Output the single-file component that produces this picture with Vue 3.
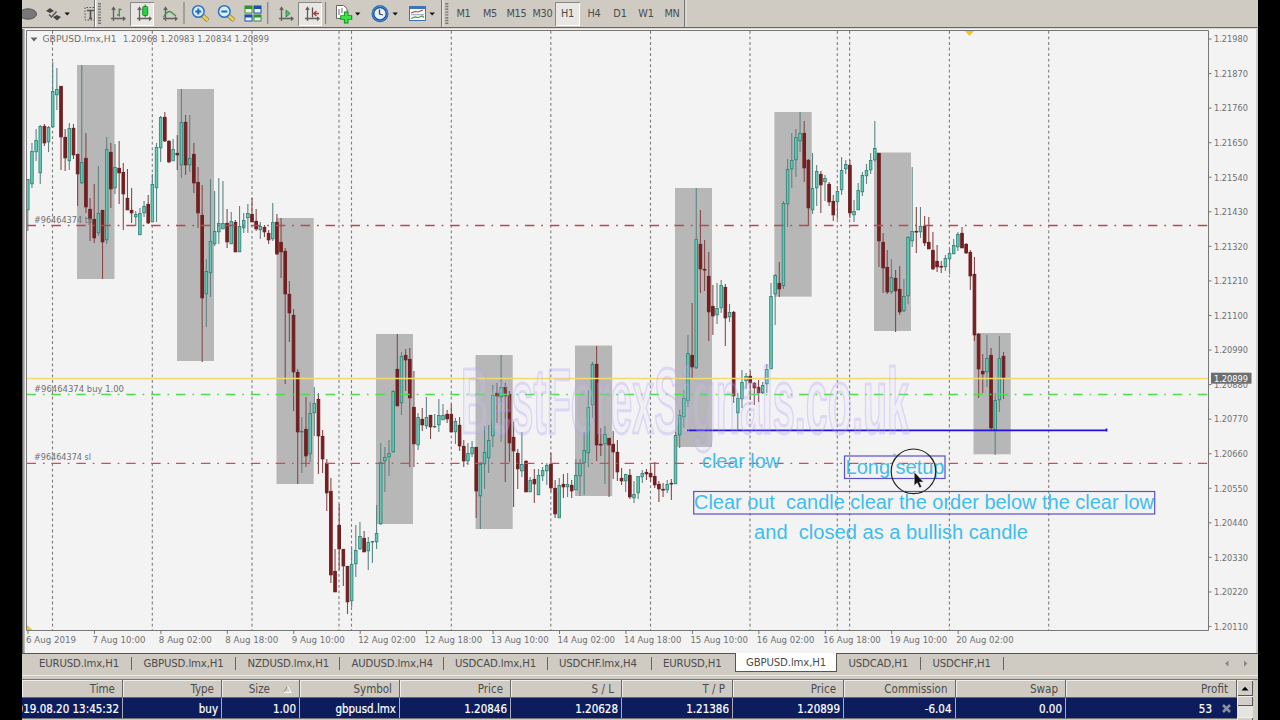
<script setup>
const periods = ['M1', 'M5', 'M15', 'M30', 'H1', 'H4', 'D1', 'W1', 'MN']
const tabs = [
  'EURUSD.lmx,H1', 'GBPUSD.lmx,H1', 'NZDUSD.lmx,H1', 'AUDUSD.lmx,H4', 'USDCAD.lmx,H1',
  'USDCHF.lmx,H4', 'EURUSD,H1', 'GBPUSD.lmx,H1', 'USDCAD,H1', 'USDCHF,H1'
]
const order = [
  ['Time', '2019.08.20 13:45:32'],
  ['Type', 'buy'],
  ['Size', '1.00'],
  ['Symbol', 'gbpusd.lmx'],
  ['Price', '1.20846'],
  ['S / L', '1.20628'],
  ['T / P', '1.21386'],
  ['Price', '1.20899'],
  ['Commission', '-6.04'],
  ['Swap', '0.00'],
  ['Profit', '53']
]

// day separators
const days = [52.5, 152.3, 252, 339, 351.5, 451.3, 550.8, 650.5, 750, 837.3, 849.6, 949.4, 1048.7]

// x, y, width, height of the shaded sessions
const sessions = [
  [77, 65, 37.5, 214], [177, 89, 37, 272], [276.5, 218, 37.2, 266], [376, 334, 37, 190],
  [475.5, 355, 37.2, 174], [575, 345.5, 37.2, 150.5], [675, 188, 37, 259], [774.4, 112, 37.3, 184.6],
  [874, 152.5, 37, 178.5], [973.5, 333, 37.2, 121.3]
]

const prices = Array.from({ length: 18 }, (_, i) => ({
  label: (1.2198 - i * 0.0011).toFixed(5),
  y: 39 + i * 34.56
}))

const times = [
  '6 Aug 2019', '7 Aug 10:00', '8 Aug 02:00', '8 Aug 18:00', '9 Aug 10:00', '12 Aug 02:00',
  '12 Aug 18:00', '13 Aug 10:00', '14 Aug 02:00', '14 Aug 18:00', '15 Aug 10:00', '16 Aug 02:00',
  '16 Aug 18:00', '19 Aug 10:00', '20 Aug 02:00'
].map((label, i) => ({
  label,
  tick: 28 + i * 66.44,
  x: 26 + i * 66.44,
  w: i === 0 ? 50 : i < 5 ? 53 : 57.5
}))

// high, body top, body bottom, low, 1 = bullish
const raw = `
179 179 210 231 1|143 151 184 188 1|129 140 152 161 1|125 126 173 184 1|124 126 143 146 0|126 127 142 152 1
62 91 127 128 1|68 89 95 110 1|86 86 137 170 0|129 137 158 171 0|123 128 161 170 1|124 128 155 159 0
154 154 174 206 0|65 162 183 184 1|133 158 207 213 0|198 209 219 241 0|184 219 238 243 0|166 213 233 236 1
210 210 242 279 0|137 149 240 244 1|143 152 189 208 0|144 167 188 194 1|141 168 173 204 0|163 172 194 230 0
169 198 210 210 0|188 210 213 223 0|211 214 217 226 1|208 213 235 235 1|201 206 213 217 1|195 204 223 224 0
174 184 222 222 1|143 147 188 222 1|116 117 148 162 1|112 117 141 142 0|140 141 162 163 0|139 149 161 161 1
135 153 155 170 0|89 122 165 178 1|115 122 165 175 0|115 158 165 172 1|143 154 183 193 0|167 182 213 228 0
185 215 298 362 0|259 271 294 327 1|179 241 273 297 1|191 231 244 246 1|178 223 232 244 1|181 223 229 229 1
209 223 242 248 0|212 221 244 244 1|220 222 252 252 0|206 226 252 252 1|213 220 228 233 1|204 213 218 233 1
198 214 222 222 0|209 221 229 231 0|222 226 230 239 1|225 227 232 237 0|230 233 240 244 0|203 222 239 241 1
214 222 254 255 0|218 242 252 278 0|248 251 294 384 0|281 294 313 342 0|309 315 372 411 0|369 372 432 484 0
417 431 432 473 1|397 429 456 467 0|402 413 454 462 1|387 403 413 436 1|393 399 436 474 0|430 436 459 473 0
459 463 493 511 0|478 491 575 583 0|549 571 592 592 0|504 525 549 570 0|549 549 566 586 0|566 566 602 614 0
547 564 601 607 1|525 550 564 577 1|522 536 549 550 1|531 538 552 552 0|537 542 551 570 1|541 541 542 563 1
505 533 542 549 1|443 462 524 525 1|447 457 461 492 1|440 453 457 476 1|390 391 452 453 1|334 369 406 406 0
352 356 403 415 1|349 355 360 391 0|348 359 398 467 0|371 407 444 467 0|413 417 445 450 1|408 419 425 431 0
397 417 426 429 1|415 415 427 439 0|414 426 427 428 1|399 415 425 432 1|404 415 420 420 1|410 414 419 423 0
404 414 432 432 0|418 421 432 444 1|417 425 446 451 0|440 446 461 467 0|443 453 461 465 1|441 447 454 457 1
447 447 491 518 0|462 464 496 529 1|426 452 464 489 1|425 440 458 473 1|385 395 436 447 1|383 393 396 423 0
355 387 397 442 1|383 387 396 482 0|391 394 443 462 0|422 437 451 507 0|449 453 469 489 0|432 464 471 477 1
460 461 492 492 0|477 480 492 492 1|469 479 484 503 0|469 475 495 495 1|467 470 476 481 1|463 465 471 485 1
453 464 488 492 0|480 488 514 518 0|478 485 518 518 1|474 484 487 498 0|473 484 487 497 1|480 485 491 498 0
459 475 490 490 1|459 463 476 496 1|432 450 463 495 1|390 407 453 467 1|362 364 405 418 1|346 364 445 461 0
428 444 445 456 0|426 434 444 484 1|438 438 445 497 0|431 444 452 479 0|440 452 472 481 0|468 478 481 485 0
474 474 481 492 1|469 475 497 499 0|481 494 498 503 1|476 476 493 499 1|470 473 477 483 1|469 472 474 480 0
466 473 477 482 0|462 476 485 488 0|481 484 489 502 0|483 489 490 497 0|480 484 490 493 1|479 483 484 500 0
432 435 484 484 1|410 415 435 448 1|390 398 417 428 1|335 353 401 407 1|303 355 367 379 0|188 239 368 369 1
210 244 269 293 0|240 269 270 291 0|252 276 312 341 0|285 306 316 335 0|283 308 315 324 1|280 285 308 313 1
284 287 318 346 0|304 312 317 322 1|311 312 396 403 0|393 398 413 430 1|370 382 399 408 1|373 376 381 389 1
371 376 383 400 0|382 383 388 405 0|380 387 393 402 0|382 385 393 394 1|364 369 384 393 1|283 296 369 369 1
274 275 294 325 1|262 283 289 297 0|201 203 286 289 1|159 169 204 227 1|133 160 169 188 1|129 137 160 177 1
112 133 141 152 1|121 133 168 182 0|159 160 208 226 0|153 188 210 214 1|165 171 188 206 1|171 174 185 213 0
175 178 182 201 1|182 184 202 206 0|195 201 215 221 0|186 191 202 219 1|157 170 190 195 1|160 164 169 174 1
160 165 213 218 0|200 211 215 222 1|183 190 210 210 1|172 175 192 196 1|164 170 176 184 1|153 160 170 174 1
121 148 160 162 1|153 153 241 267 0|233 242 268 293 0|250 267 292 294 0|259 277 292 294 1|270 278 291 332 0
266 289 312 315 0|279 296 311 312 1|236 237 296 304 1|167 231 241 247 1|207 231 232 253 0|207 226 232 238 1
216 226 243 246 0|217 242 249 249 0|232 250 269 270 0|245 261 267 272 0|261 266 267 273 0|255 258 267 271 1
248 253 259 274 1|239 245 254 254 1|232 234 247 251 1|227 233 248 248 0|243 244 253 254 0|250 252 276 290 0
257 274 335 341 0|333 334 369 398 0|354 371 374 393 0|335 358 372 387 1|348 355 428 430 0|393 400 430 455 1
336 358 400 412 1|352 356 378 399 0`

const candles = raw.trim().split(/[|\n]/).map((row, i) => {
  const [high, top, bottom, low, up] = row.split(' ').map(Number)
  return { x: 27.8 + i * 4.152, high, top, bottom, low, up: up === 1 }
})
</script>

<template>
  <div class="terminal">
    <div class="toolbar">
      <svg viewBox="0 0 20 28"><ellipse cx="6" cy="14" rx="8.5" ry="5.2" fill="#777" stroke="#555" /></svg>
      <svg viewBox="0 0 20 28">
        <path d="M4 11l4-3 4 3-4 2zM11 17l4-2 4 2-4 3.500z" fill="#444" />
        <path d="M7 14.500l2.500 2.500 5-5.500" fill="none" stroke="#555" stroke-width="1.500" />
      </svg>
      <svg viewBox="0 0 10 28"><path d="M2.500 12.500h5.400l-2.700 3z" fill="#111" /></svg>
      <svg viewBox="0 0 23 28">
        <path d="M22 7.500H13V20h9" fill="none" stroke="#555" stroke-dasharray="1.500 1.500" />
        <path d="M15 10.500h7M18.500 10v8.500M17 18.500h3" fill="none" stroke="#555" stroke-width="1.700" />
        <path d="M22.500 0v27" stroke="#777" />
      </svg>
      <svg viewBox="0 0 10 28">
        <path d="M.7 0v27" stroke="#fff" stroke-width="1.400" />
        <path d="M4.500 3v21" stroke="#777" stroke-width="3" stroke-dasharray="1.400 1.400" />
      </svg>
      <svg viewBox="0 0 25 28">
        <path d="M8.500 8v13M6 18.500h13M6.800 10l1.700-2.500 1.700 2.500M18 17l2 1.500-2 2" class="axis" />
        <path d="M12 15h2.300M14.300 8.500v8M14.300 9.500h2.200" fill="none" stroke="#3f9450" stroke-width="1.400" />
      </svg>
      <svg viewBox="0 2 24 24" class="pressed">
        <path d="M9.500 8v13M7 18.500h13M7.800 10l1.700-2.500 1.700 2.500M19 17l2 1.500-2 2" class="axis" />
        <path d="M15.200 4.500v13" stroke="#167a20" />
        <rect x="12.700" y="6.500" width="5" height="9" rx="1" fill="#2fce4a" stroke="#178a2b" />
      </svg>
      <svg viewBox="0 0 28 28">
        <path d="M11.500 8v13M9 18.500h13M9.800 10l1.700-2.500 1.700 2.500M21 17l2 1.500-2 2" class="axis" />
        <path d="M9.500 17c3-5 5-6.500 7.500-5l5 4" fill="none" stroke="#3f9450" stroke-width="1.400" />
      </svg>
      <svg viewBox="0 0 5 28"><path d="M2 2v22" class="rule" /></svg>
      <svg viewBox="0 0 26 28">
        <path d="M15 15l6 5.500" stroke="#9c7a22" stroke-width="4.200" />
        <path d="M15 15l5.800 5.300" stroke="#efd15a" stroke-width="2.600" />
        <circle cx="11.300" cy="11.500" r="5.800" fill="#d5efff" stroke="#2f72c4" stroke-width="1.500" />
        <path d="M8.300 11.500h6M11.300 8.500v6" stroke="#2466bd" stroke-width="2" />
      </svg>
      <svg viewBox="0 0 27 28">
        <path d="M15 15l6 5.500" stroke="#9c7a22" stroke-width="4.200" />
        <path d="M15 15l5.800 5.300" stroke="#efd15a" stroke-width="2.600" />
        <circle cx="11.300" cy="11.500" r="5.800" fill="#d5efff" stroke="#2f72c4" stroke-width="1.500" />
        <path d="M8.300 11.500h6" stroke="#2466bd" stroke-width="2" />
      </svg>
      <svg viewBox="0 0 25 28">
        <path d="M4.500 5.500h8v8h-8zM13.500 14.500h8v7h-8z" fill="#388e2b" />
        <path d="M13.500 5.500h8v8h-8zM4.500 14.500h8v7h-8z" fill="#1b4fae" />
        <path d="M5.500 9h6v3.500h-6zM14.500 9h6v3.500h-6zM5.500 17.500h6v3h-6zM14.500 17.500h6v3h-6z" fill="#eef5f5" />
      </svg>
      <svg viewBox="0 0 5 28"><path d="M2.700 2v22" class="rule" /></svg>
      <svg viewBox="0 0 28 28">
        <path d="M11.500 8v13M9 18.500h13M9.800 10l1.700-2.500 1.700 2.500M21 17l2 1.500-2 2" class="axis" />
        <path d="M16 10v7l4.200-3.500z" fill="#52bd6c" stroke="#26813b" stroke-width=".8" />
      </svg>
      <svg viewBox="0 2 24 24" class="pressed">
        <path d="M9.500 8v13M7 18.500h13M7.800 10l1.700-2.500 1.700 2.500M19 17l2 1.500-2 2" class="axis" />
        <path d="M14.500 7.500v10" stroke="#555" stroke-width="1.300" />
        <path d="M21 13.500h-5M18.500 11l-2.700 2.500 2.700 2.500" fill="none" stroke="#b43a35" stroke-width="1.400" />
      </svg>
      <svg viewBox="0 0 8 28"><path d="M3.500 2v22" class="rule" /></svg>
      <svg viewBox="0 0 24 28">
        <path d="M6.500 5.500h7l3.500 3v10H6.500z" fill="#fff" stroke="#666" />
        <path d="M9 9v6M12 8v5" stroke="#666" />
        <path d="M16.200 11.500v12M10.200 17.500h12" stroke="#148a1d" stroke-width="4.600" />
        <path d="M16.200 12.500v10M11.200 17.500h10" stroke="#37e545" stroke-width="2.800" />
      </svg>
      <svg viewBox="0 0 8 28"><path d="M1 12.500h5.400l-2.700 3z" fill="#111" /></svg>
      <svg viewBox="0 0 28 28">
        <circle cx="18" cy="13.700" r="7" fill="#e9f2fa" stroke="#1c56a4" stroke-width="3" />
        <circle cx="18" cy="13.700" r="7.300" fill="none" stroke="#4e94dc" />
        <path d="M17.500 9.500v4.500l3.500 1" fill="none" stroke="#445" stroke-width="1.300" />
      </svg>
      <svg viewBox="0 0 9 28"><path d="M2.500 12.500h5.400l-2.700 3z" fill="#111" /></svg>
      <svg viewBox="0 0 29 28">
        <rect x="10.500" y="6.500" width="16" height="14" fill="#f9fbfb" stroke="#3d74b5" />
        <path d="M10 7.500h17" stroke="#3d74b5" stroke-width="3" />
        <path d="M12 13l4-1.500 3 .5 5-2" fill="none" stroke="#b8443c" stroke-width="1.200" />
        <path d="M12 14.700h13" stroke="#8aa6c0" />
        <path d="M12 18.500l4-1.500 3 .700 4-1.700 2 1.500" fill="none" stroke="#4c9d4c" stroke-width="1.200" />
      </svg>
      <svg viewBox="0 0 8 28"><path d="M1.500 12.500h5.400l-2.700 3z" fill="#111" /></svg>
      <svg viewBox="0 0 8 28"><path d="M5.500 0v27" stroke="#777" /><path d="M7 0v27" stroke="#eee" /></svg>
      <svg viewBox="0 0 6 28"><path d="M2.800 3v21" stroke="#777" stroke-width="3" stroke-dasharray="1.400 1.400" /></svg>
      <span v-for="p in periods" :key="p" class="period" :class="{ pressed: p === 'H1' }">{{ p }}</span>
      <svg viewBox="0 0 4 28"><path d="M.7 0v27" stroke="#666" /><path d="M2 0v27" stroke="#eee" /></svg>
    </div>

    <svg class="chart" viewBox="22 28 1236 625">
      <rect x="22" y="28" width="1236" height="625" fill="#f3f3f3" />
      <path d="M22.800 28v625" stroke="#666" stroke-width="1.600" />
      <path d="M24.500 28v625" stroke="#bbb" />
      <path d="M1257 28v625" stroke="#bbb" stroke-width="1.300" />
      <path d="M22 28.500h1236" stroke="#ddd9d2" />

      <rect v-for="(s, i) in sessions" :key="'s' + i" :x="s[0]" :y="s[1]" :width="s[2]" :height="s[3]" fill="#b7b7b7" />
      <path v-for="d in days" :key="d" :d="`M${d} 31v599`" class="day" />

      <g v-for="(c, i) in candles" :key="i" :class="c.up ? 'bull' : 'bear'">
        <path :d="`M${c.x} ${c.high}V${c.low}`" />
        <rect :x="c.x - 1.3" :y="c.top + 0.4" width="2.6" :height="Math.max(c.bottom - c.top - 0.6, 0.6)" />
      </g>

      <path d="M26.500 225.500H1208" class="level stop" />
      <path d="M26.500 463.300H1208" class="level stop bright" />
      <path d="M26.500 394.500H1208" class="level entry" />
      <path d="M26.500 378.500H1208" stroke="#f4d96c" stroke-width="1.300" />
      <path d="M687 430.300H1106.500M1106.500 428.500v3" stroke="#2510dc" stroke-width="1.800" fill="none" />

      <text x="461" y="433" textLength="448" lengthAdjust="spacingAndGlyphs" class="watermark">BestForexSignals.co.uk</text>

      <g class="small">
        <path d="M30.500 37.500h7l-3.500 4z" fill="#666" />
        <text x="42.500" y="42.300" textLength="74" lengthAdjust="spacingAndGlyphs">GBPUSD.lmx,H1</text>
        <text x="123" y="42.300" textLength="146" lengthAdjust="spacingAndGlyphs">1.20968 1.20983 1.20834 1.20899</text>
        <text x="34" y="222.700" textLength="59" lengthAdjust="spacingAndGlyphs">#96464374 tp</text>
        <text x="34" y="391.700" textLength="90" lengthAdjust="spacingAndGlyphs">#96464374 buy 1.00</text>
        <text x="34" y="460.300" textLength="57" lengthAdjust="spacingAndGlyphs">#96464374 sl</text>
      </g>

      <path d="M26.500 630.500V30.500H1208.500V630.500z" fill="none" stroke="#777" />
      <path d="M965 31h9l-4.500 5z" fill="#eec52b" />
      <path d="M27 625v5h5.500z" fill="#eec52b" />

      <g class="small">
        <g v-for="p in prices" :key="p.label">
          <path :d="`M1208.500 ${p.y}h3`" stroke="#777" />
          <text x="1214" :y="p.y + 3.3" textLength="34" lengthAdjust="spacingAndGlyphs">{{ p.label }}</text>
        </g>
        <g v-for="t in times" :key="t.label">
          <path :d="`M${t.tick} 630.5v3.500`" stroke="#777" />
          <text :x="t.x" y="643.3" :textLength="t.w" lengthAdjust="spacingAndGlyphs">{{ t.label }}</text>
        </g>
      </g>
      <rect x="1211" y="372.700" width="40.500" height="11" fill="#6e6e6e" />
      <text x="1214" y="381.600" textLength="34" lengthAdjust="spacingAndGlyphs" class="current">1.20899</text>

      <g class="notes">
        <rect x="844.500" y="456" width="100.500" height="22.500" />
        <rect x="693.700" y="491.500" width="461" height="22.500" />
        <text x="702" y="467.700" textLength="78" lengthAdjust="spacingAndGlyphs">clear low</text>
        <text x="845.500" y="474" textLength="99" lengthAdjust="spacingAndGlyphs">Long setup</text>
        <text x="694" y="509.300" textLength="460" lengthAdjust="spacingAndGlyphs">Clear out&nbsp; candle clear the order below the clear low</text>
        <text x="754" y="539.300" textLength="274" lengthAdjust="spacingAndGlyphs">and&nbsp; closed as a bullish candle</text>
      </g>
      <path d="M892.500 455.300l2-1.300 2 1.300" fill="none" stroke="#8fa8e0" />
      <circle cx="913.500" cy="471.300" r="22.300" fill="none" stroke="#222" stroke-width="1.200" />
      <path d="M914.300 472v13.500l3-2.700 2.300 5 2-1-2.200-4.800h4z" fill="#111" stroke="#eee" stroke-width=".4" />
    </svg>

    <div class="tabs">
      <span v-for="(t, i) in tabs" :key="i" :class="{ active: i === 7 }">{{ t }}</span>
      <svg class="scrollers" viewBox="0 0 30 10">
        <path d="M6.500 1.500v6l-3.500-3zM22 1.500v6l3.500-3z" fill="#888" />
      </svg>
    </div>

    <div class="orders">
      <div class="row head">
        <span v-for="(o, i) in order" :key="i">
          {{ o[0] }}
          <svg v-if="o[0] === 'Size'" class="sort" viewBox="0 0 9 8"><path d="M.8 7.300L4.500 1" stroke="#888" /><path d="M4.500 1l3.700 6.300H.8" fill="none" stroke="#fff" /></svg>
        </span>
      </div>
      <div class="row data">
        <span v-for="(o, i) in order" :key="i">
          {{ o[1] }}
          <svg v-if="o[0] === 'Profit'" class="close" viewBox="0 0 9 9"><path d="M1 1l7 7M8 1l-7 7" stroke="#8b8f9c" stroke-width="2.600" /></svg>
        </span>
      </div>
      <div class="scrollbar">
        <div class="up"><svg viewBox="0 0 8 5"><path d="M.5 4.500h7L4 .8z" fill="#000" /></svg></div>
        <div class="thumb"></div>
        <div class="track"></div>
        <div class="down"></div>
      </div>
    </div>
  </div>
</template>

<style>
body {
  background: #000;
  overflow: hidden;
}
</style>

<style scoped>
.terminal {
  width: 1236px;
  height: 720px;
  margin-left: 22px;
  background: #cfcbc3;
  overflow: hidden;
  font-family: 'DejaVu Sans Condensed', 'DejaVu Sans', sans-serif;
  font-stretch: condensed;
  color: #4c4c4c;
}
.toolbar {
  display: grid;
  grid-template-columns:
    20px 20px 10px 23px 10px 25px 24px 28px 5px 26px 27px 25px 5px 28px 24px 8px
    24px 8px 28px 9px 29px 8px 8px 6px 27px 26px 27px 25px 25px 28px 24px 28px 24px 4px;
  height: 28px;
  box-sizing: border-box;
  border-bottom: 1.5px solid #666;
}
.toolbar svg {
  width: 100%;
  height: 28px;
  display: block;
}
.axis {
  fill: none;
  stroke: #606060;
  stroke-width: 1.3;
}
.rule {
  stroke: #8a8782;
  stroke-width: 1.3;
}
.period {
  font-size: 10.8px;
  line-height: 28px;
  text-align: center;
  letter-spacing: -0.2px;
}
.toolbar .pressed {
  height: 24px;
  margin-top: 2px;
  line-height: 24px;
  background: #e9e7e3;
  box-shadow: inset 1px 1px #888, inset -1px -1px #fff;
}
.chart {
  display: block;
  width: 1236px;
  height: 625px;
}
.day {
  stroke: #7c7c7c;
  stroke-width: 1.1;
  stroke-dasharray: 2.8 2.74;
}
.bull path {
  stroke: #5c8583;
  stroke-width: 1.1;
}
.bull rect {
  fill: #62c9b6;
  stroke: #2f7f74;
  stroke-width: 0.8;
}
.bear path {
  stroke: #874a4a;
  stroke-width: 1.1;
}
.bear rect {
  fill: #7b1d1f;
  stroke: #6b2022;
  stroke-width: 1;
}
.level {
  stroke-width: 1.3;
  stroke-dasharray: 9.5 6.9 1.7 6.82;
}
.stop {
  stroke: #bf4450;
}
.bright {
  stroke: #e04455;
}
.entry {
  stroke: #4fdc4c;
}
.watermark {
  font: bold 92px 'Liberation Sans', sans-serif;
  fill: rgba(225, 220, 255, 0.12);
  stroke: rgba(178, 160, 245, 0.33);
  stroke-width: 3;
  stroke-linejoin: round;
}
.small {
  font-size: 9.3px;
}
.small text {
  fill: #707070;
}
.current {
  font-size: 9.3px;
  fill: #fff;
}
.notes text {
  font: 19.6px 'Liberation Sans', sans-serif;
  fill: #3fbdec;
}
.notes rect {
  fill: none;
  stroke: #5a50c8;
  stroke-width: 1.2;
}
.tabs {
  display: grid;
  grid-template-columns: 110px 104px 104px 103.5px 104px 104px 83.5px 102px 84px 83px 1fr;
  height: 22px;
  box-sizing: border-box;
  border-top: 1.5px solid #555;
  font-size: 11.3px;
  letter-spacing: -0.15px;
  line-height: 19px;
}
.tabs span {
  position: relative;
  padding-left: 11.5px;
  white-space: nowrap;
}
.tabs span:first-child {
  padding-left: 17px;
}
.tabs span:not(.active)::after {
  content: '';
  position: absolute;
  right: 0;
  top: 3px;
  width: 1px;
  height: 13px;
  background: #666;
}
.tabs span:nth-child(7)::after {
  display: none;
}
.tabs .active {
  height: 19px;
  margin-top: -1px;
  padding-top: 1px;
  line-height: 18px;
  background: #fff;
  border: solid #555;
  border-width: 0 1px 1px;
  padding-left: 10px;
  box-sizing: border-box;
}
.scrollers {
  width: 30px;
  height: 10px;
  justify-self: end;
  margin: 5px 6px 0 0;
}
.orders {
  display: grid;
  grid-template-columns: 1215px 16px;
  grid-template-rows: 18px 21px;
  height: 45px;
  box-sizing: border-box;
  border-top: 1.5px solid #ece9e4;
  box-shadow: inset 0 3px #cfcbc3, inset 0 4px #777;
  padding-top: 4px;
}
.row {
  display: grid;
  grid-template-columns: 101px 99px 78px 100px 111px 111px 111px 111px 111.5px 110.5px 171px;
  width: 1215px;
  overflow: hidden;
}
.row span {
  display: flex;
  justify-content: flex-end;
  align-items: center;
  white-space: nowrap;
  box-sizing: border-box;
  font-size: 11.5px;
}
.head {
  grid-area: 1 / 1;
}
.head span {
  padding-right: 7px;
  border-right: 1.5px solid #666;
  border-bottom: 1px solid #666;
  box-shadow: inset 1px 1px #eee;
}
.data {
  grid-area: 2 / 1;
  background: #0c1c5c;
  border-bottom: 1px solid #777;
  color: #fff;
}
.data span {
  padding-right: 3px;
  padding-top: 1px;
  border-right: 1.5px solid #a9adba;
  -webkit-text-stroke: 0.2px #fff;
}
.data span:last-child {
  border: 0;
  padding-right: 6px;
}
.head span:last-child {
  padding-right: 8px;
}
.sort {
  width: 9px;
  height: 8px;
  margin-left: 13px;
  fill: none;
}
.close {
  width: 9px;
  height: 9px;
  margin-left: 10px;
}
.scrollbar {
  grid-area: 1 / 2 / 3 / 3;
  display: flex;
  flex-direction: column;
  width: 16px;
}
.up,
.thumb,
.down {
  flex: none;
  height: 16px;
  background: #d3cfc8;
  box-shadow: inset 1px 1px #f2f0ec, inset -1px -1px #555;
}
.up {
  display: flex;
  align-items: center;
  justify-content: center;
}
.up svg {
  width: 8px;
  height: 5px;
}
.thumb {
  height: 10px;
}
.track {
  flex: none;
  height: 11px;
  background: #e6e4df;
}
</style>
